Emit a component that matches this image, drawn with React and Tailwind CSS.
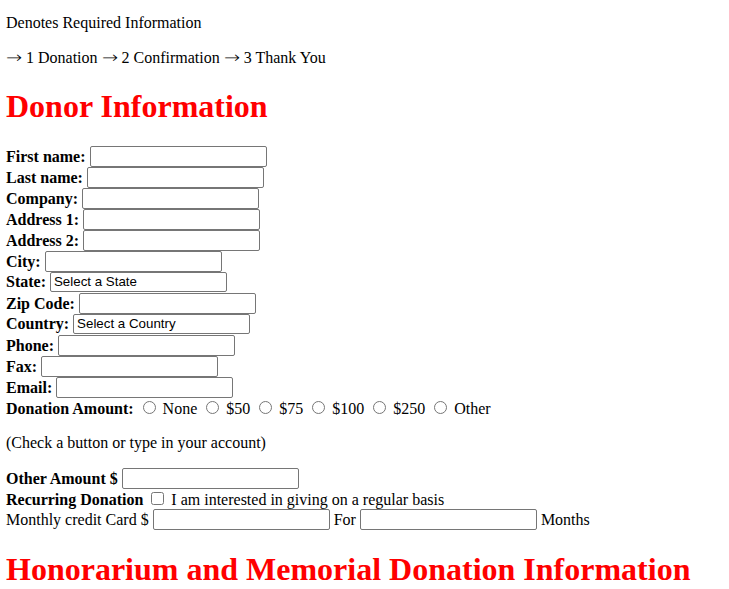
import React from 'react';

const field =
  "inline-block box-border w-[177px] h-[21px] border border-[#767676] rounded-[2px] bg-white px-[2px] pt-[2px] align-baseline font-['Liberation_Sans',Arial,sans-serif] text-[13.33px] leading-[normal]";

const dropdown =
  "inline-block box-border w-[177px] h-[20px] mb-[1px] appearance-none border border-[#767676] rounded-[2px] bg-white pl-[3px] text-black align-baseline font-['Liberation_Sans',Arial,sans-serif] text-[13.33px] leading-[normal]";

const heading = "mb-[21.44px] text-[32px] font-bold leading-[normal] text-[#ff0000]";

function Arrow() {
  return (
    <span className="inline-block w-[16px] origin-left scale-x-[1.2] font-['DejaVu_Sans',sans-serif] font-extralight">
      →
    </span>
  );
}

function Row({ label, children }) {
  return (
    <>
      <b>{label}</b> {children}
      <br />
    </>
  );
}

function Radio({ label }) {
  return (
    <>
      <input type="radio" name="amount" className="mt-[3px] mr-[3px] ml-[5px]" /> {label}
    </>
  );
}

export default function App() {
  return (
    <div className="min-h-[589px] bg-white px-[6px] pt-[14px] font-['Liberation_Serif','Times_New_Roman',serif] text-[16px] leading-[normal] text-black">
      <p className="mb-4">Denotes Required Information</p>
      <p className="my-4">
        <Arrow /> 1 Donation <Arrow /> 2 Confirmation <Arrow /> 3 Thank You
      </p>

      <h1 className={`mt-[20.5px] ${heading}`}>Donor Information</h1>

      <div>
        <Row label="First name:"><input type="text" className={field} /></Row>
        <Row label="Last name:"><input type="text" className={field} /></Row>
        <Row label="Company:"><input type="text" className={field} /></Row>
        <Row label="Address 1:"><input type="text" className={field} /></Row>
        <Row label="Address 2:"><input type="text" className={field} /></Row>
        <Row label="City:"><input type="text" className={field} /></Row>
        <Row label="State:">
          <select className={dropdown} defaultValue="">
            <option value="">Select a State</option>
          </select>
        </Row>
        <Row label="Zip Code:"><input type="text" className={field} /></Row>
        <Row label="Country:">
          <select className={dropdown} defaultValue="">
            <option value="">Select a Country</option>
          </select>
        </Row>
        <Row label="Phone:"><input type="text" className={field} /></Row>
        <Row label="Fax:"><input type="text" className={field} /></Row>
        <Row label="Email:"><input type="text" className={field} /></Row>
        <b>Donation Amount:</b>{' '}
        <Radio label="None" />{' '}
        <Radio label="$50" />{' '}
        <Radio label="$75" />{' '}
        <Radio label="$100" />{' '}
        <Radio label="$250" />{' '}
        <Radio label="Other" />
      </div>

      <p className="my-4">(Check a button or type in your account)</p>

      <div>
        <b>Other Amount $</b> <input type="text" className={field} />
        <br />
        <b>Recurring Donation</b>{' '}
        <input type="checkbox" className="m-[3px] ml-[4px]" /> I am interested in giving on a regular basis
        <br />
        Monthly credit Card $ <input type="text" className={field} /> For{' '}
        <input type="text" className={field} /> Months
      </div>

      <h1 className={`mt-[21.44px] ${heading}`}>Honorarium and Memorial Donation Information</h1>
    </div>
  );
}
